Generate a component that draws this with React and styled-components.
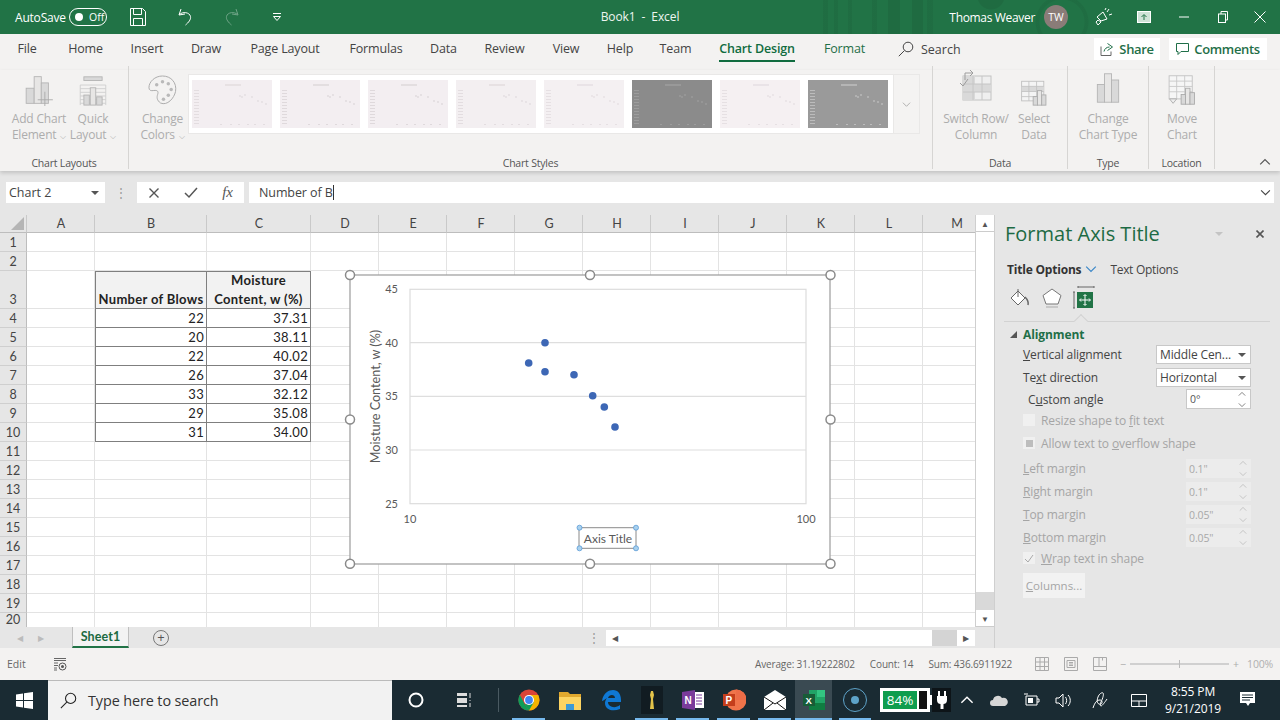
import React from 'react';
import styled, { createGlobalStyle } from 'styled-components';

const Global = createGlobalStyle`
  html, body { margin: 0; padding: 0; width: 1280px; height: 720px; overflow: hidden; background: #e6e6e6; }
  * { box-sizing: border-box; }
  #root { width: 1280px; height: 720px; }
`;
const UI = `"Open Sans", "Noto Sans", sans-serif`;
const CELL = `Lato, "Open Sans", sans-serif`;

const Page = styled.div`width:1280px;height:720px;display:flex;flex-direction:column;font-family:${UI};overflow:hidden;`;

/* ---------- title bar ---------- */
const TitleBar = styled.header`
  height:34px;flex:none;color:#fff;display:grid;grid-template-columns:1fr auto 1fr;align-items:center;font-size:12px;
  background-color:#217346;
  background-image:
    radial-gradient(circle at 991px -4px, rgba(0,0,0,.07) 0 13px, transparent 14px),
    radial-gradient(circle at 1062px 22px, transparent 0 22px, rgba(0,0,0,.05) 23px 26px, transparent 27px),
    linear-gradient(90deg,
      transparent 823px, rgba(0,0,0,.05) 823px 828px, transparent 828px 834px,
      rgba(0,0,0,.05) 834px 838px, transparent 838px 848px, rgba(0,0,0,.05) 848px 852px,
      transparent 852px 872px, rgba(0,0,0,.05) 872px 877px, transparent 877px 888px,
      rgba(0,0,0,.07) 888px 900px, transparent 900px 912px, rgba(0,0,0,.07) 912px 923px,
      transparent 923px 927px, rgba(0,0,0,.05) 927px 933px, transparent 933px);
`;
const QuickAccess = styled.div`display:flex;align-items:center;padding-left:15px;`;
const AutoLabel = styled.span`width:54px;letter-spacing:-.2px;`;
const Toggle = styled.div`width:38px;height:18px;border:1px solid #fff;border-radius:9px;display:flex;align-items:center;padding-left:5px;gap:6px;font-size:10.5px;`;
const Knob = styled.i`width:8px;height:8px;border-radius:50%;background:#fff;display:block;`;
const QuickBtn = styled.div`width:${p=>p.$w}px;display:flex;justify-content:center;opacity:${p=>p.$dim?0.35:1};`;
const DocTitle = styled.div`font-size:12px;letter-spacing:-.1px;color:#eef5f0;margin-top:-2px;`;
const UserArea = styled.div`display:flex;align-items:center;justify-content:flex-end;padding-right:8px;`;
const UserName = styled.span`font-size:12px;letter-spacing:-.33px;margin-right:9px;`;
const Avatar = styled.div`width:24px;height:24px;border-radius:50%;background:#8a7c78;display:flex;align-items:center;justify-content:center;font-size:10.5px;margin-right:20px;`;
const WinBtn = styled.div`width:${p=>p.$w}px;display:flex;justify-content:center;`;

/* ---------- tabs ---------- */
const TabRow = styled.nav`height:36px;flex:none;background:#f3f2f1;display:flex;align-items:flex-start;font-size:12.5px;color:#444;position:relative;`;
const Tab = styled.div`width:${p=>p.$w}px;display:flex;justify-content:center;white-space:nowrap;`;
const TabLabel = styled.span`
  height:25px;line-height:24px;letter-spacing:-.15px;margin-top:3px;
  color:${p=>p.$active?'#106c3f':p.$green?'#1f6f48':'#444'};
  font-weight:${p=>p.$active?600:400};
  border-bottom:${p=>p.$active?'2px solid #106c3f':'2px solid transparent'};
`;
const SearchTab = styled.div`display:flex;align-items:center;gap:7px;margin-left:19px;height:22px;margin-top:4px;`;
const Spacer = styled.div`flex:1;`;
const ActionBtn = styled.div`height:22px;margin-top:4px;background:#fff;display:flex;align-items:center;justify-content:center;gap:5px;color:#1f6f48;font-weight:600;font-size:13px;width:${p=>p.$w}px;margin-right:${p=>p.$mr}px;letter-spacing:-.35px;`;

/* ---------- ribbon ---------- */
const Ribbon = styled.section`height:101px;flex:none;background:#f3f2f1;display:flex;box-shadow:0 2px 4px rgba(0,0,0,.16);position:relative;z-index:2;`;
const Group = styled.div`width:${p=>p.$w}px;height:103px;flex:none;border-right:1px solid #d6d5d3;display:flex;flex-direction:column;margin-top:-4px;padding-top:4px;`;
const GroupBody = styled.div`flex:1;display:flex;padding-left:${p=>p.$pl||0}px;`;
const GroupLabel = styled.div`height:17px;font-size:10.5px;line-height:22px;text-align:center;color:#555;letter-spacing:-.2px;`;
const BigBtn = styled.div`width:${p=>p.$w}px;flex:none;display:flex;flex-direction:column;align-items:center;`;
const BigIcon = styled.div`height:36px;display:flex;align-items:flex-end;justify-content:center;`;
const BigText = styled.div`font-size:12px;line-height:16px;color:#adadad;text-align:center;white-space:nowrap;margin-top:5px;letter-spacing:-.2px;`;
const Caret = styled.span`font-size:8px;margin-left:1px;`;
const Gallery = styled.div`width:705px;height:60px;margin-top:4px;background:#fff;border:1px solid #e9e8e7;border-right:none;display:flex;align-items:center;gap:7.6px;padding-left:3px;flex:none;`;
const Thumb = styled.div`width:80.4px;height:48px;flex:none;background:${p=>p.$bg};`;
const Expander = styled.div`width:27px;height:60px;margin-top:4px;background:#f4f3f2;border:1px solid #e9e8e7;display:flex;align-items:center;justify-content:center;color:#aaa;flex:none;`;
const Collapse = styled.div`flex:1;display:flex;align-items:flex-end;justify-content:flex-end;padding:0 9px 3px 0;color:#555;`;

/* ---------- formula bar ---------- */
const FormulaBar = styled.section`height:44px;flex:none;background:#e6e6e6;display:flex;padding:11px 6px 0 6px;`;
const NameBox = styled.div`width:99px;height:21px;background:#fff;display:flex;align-items:center;justify-content:space-between;padding:0 5px 0 3px;font-size:12.5px;color:#444;`;
const Dots = styled.div`width:${p=>p.$w||32}px;height:21px;display:flex;align-items:center;justify-content:center;color:#9a9a9a;font-size:12px;`;
const FxBox = styled.div`width:107px;height:21px;background:#fff;display:flex;align-items:center;justify-content:space-between;padding:0 11px 0 12px;color:#555;`;
const FxText = styled.span`font-family:"Liberation Serif",serif;font-style:italic;font-size:15px;`;
const FormulaInput = styled.div`flex:1;margin-left:5px;height:21px;background:#fff;display:flex;align-items:center;justify-content:space-between;padding:0 3px 0 10px;font-size:12.5px;color:#444;`;
const Cursor = styled.span`border-right:1px solid #333;padding-right:0;line-height:15px;letter-spacing:-.1px;`;

/* ---------- main area ---------- */
const Main = styled.main`height:433px;flex:none;display:flex;`;
const Workspace = styled.div`width:995px;flex:none;display:flex;flex-direction:column;border-right:1px solid #cfcfcf;`;
const SheetRow = styled.div`height:412px;display:flex;background:#fff;`;
const Sheet = styled.div`
  width:975px;height:412px;overflow:hidden;position:relative;display:grid;
  grid-template-columns:27px 68px 112px 104px repeat(8,68px) 68px 68px;
  grid-template-rows:18px 19px 19px 38px repeat(16,19px) 15px;
  font-family:${CELL};font-size:13px;color:#222;
`;
const ColHead = styled.div`background:#e6e6e6;border-right:1px solid #c9c9c9;border-bottom:1px solid #bdbdbd;display:flex;align-items:center;justify-content:center;font-size:12.5px;color:#444;padding-left:1px;`;
const Corner = styled(ColHead)`align-items:flex-end;justify-content:flex-end;padding:0 2px 2px 0;`;
const RowHead = styled.div`background:#e6e6e6;border-right:1px solid #bdbdbd;border-bottom:1px solid #cfcfcf;display:flex;align-items:flex-end;justify-content:center;font-size:12.5px;line-height:${p=>p.$last?14:17}px;color:#444;`;
const Cell = styled.div`
  border-right:1px solid ${p=>p.$boxed?'#7f7f7f':'#e3e3e3'};
  border-bottom:1px solid ${p=>p.$boxed?'#7f7f7f':'#e3e3e3'};
  ${p=>p.$boxedLeft?'border-left:1px solid #7f7f7f;':''}
  ${p=>p.$boxedTop?'border-top:1px solid #7f7f7f;':''}
  background:${p=>p.$head?'#f2f2f2':'#fff'};
  font-weight:${p=>p.$head?700:400};
  display:flex;align-items:flex-end;justify-content:${p=>p.$head?'center':'flex-end'};
  text-align:center;line-height:19px;padding:0 ${p=>p.$head?0:2}px 0 0;white-space:pre-line;letter-spacing:${p=>p.$head?'.32px':'.3px'};
  & > span { position:relative; top:1px; }
`;
const ChartLayer = styled.svg`position:absolute;left:340px;top:50px;width:500px;height:320px;font-family:${CELL};`;
const VScroll = styled.div`width:19px;display:flex;flex-direction:column;background:#d9d9d9;border-left:1px solid #cfcfcf;`;
const ScrollBtn = styled.div`height:17px;background:#fff;display:flex;align-items:center;justify-content:center;border-bottom:1px solid #ccc;color:#555;font-size:8px;margin-top:${p=>p.$mt||0}px;`;
const VThumb = styled.div`height:360px;background:#fff;`;

const SheetBar = styled.div`height:21px;background:#e6e6e6;display:flex;align-items:center;position:relative;`;
const NavArrow = styled.div`width:21px;text-align:center;color:#bbb;font-size:8px;margin-left:${p=>p.$ml||0}px;`;
const SheetTab = styled.div`width:57px;height:21px;margin-left:21px;background:#f3f3f3;border:1px solid #bfbfbf;border-top:none;border-bottom:2px solid #217346;color:#1b6a41;font-weight:700;font-size:12.5px;display:flex;align-items:center;justify-content:center;font-family:${CELL};margin-top:-1px;letter-spacing:.1px;`;
const AddSheet = styled.div`width:16px;height:16px;border:1px solid #777;border-radius:50%;margin-left:24px;display:flex;align-items:center;justify-content:center;color:#555;font-size:13px;line-height:13px;`;
const HScrollZone = styled.div`margin-left:auto;margin-right:19px;display:flex;align-items:center;`;
const HBtn = styled.div`width:18px;height:16px;background:#fff;display:flex;align-items:center;justify-content:center;color:#555;font-size:8px;`;
const HThumb = styled.div`width:308px;height:16px;background:#fff;`;
const HTrack = styled.div`width:25px;height:16px;background:#d4d4d4;`;

/* ---------- task pane ---------- */
const Pane = styled.aside`flex:1;background:#e6e6e6;padding-left:9px;display:flex;flex-direction:column;color:#444;font-size:12px;`;
const PaneHead = styled.div`height:38px;display:flex;align-items:center;font-size:20px;color:#1d6b44;padding:0 8px 0 1px;flex:none;`;
const PaneTitle = styled.div`flex:1;margin-top:-1px;`;
const PaneCtl = styled.div`width:${p=>p.$w}px;margin-left:${p=>p.$ml||0}px;display:flex;justify-content:center;`;
const PaneTabs = styled.div`height:22px;margin-top:5px;display:flex;align-items:center;padding-left:3px;flex:none;font-size:12px;letter-spacing:-.3px;`;
const PaneTabOn = styled.span`font-weight:700;color:#333;letter-spacing:-.2px;margin-right:4px;`;
const PaneTabOff = styled.span`margin-left:13px;`;
const PaneIcons = styled.div`height:25px;margin-top:5px;display:flex;align-items:center;flex:none;padding-left:5px;gap:10px;`;
const PaneDivider = styled.div`height:1px;background:#d2d2d2;width:266px;margin-top:11px;flex:none;position:relative;`;
const Notch = styled.i`position:absolute;left:72px;top:-5px;width:10px;height:10px;transform:rotate(45deg);background:#e6e6e6;border-left:1px solid #d2d2d2;border-top:1px solid #d2d2d2;`;
const SectionHead = styled.div`height:18px;margin-top:3px;display:flex;align-items:center;flex:none;padding-left:6px;color:#1f6f48;font-weight:700;gap:6px;font-size:12px;letter-spacing:-.1px;`;
const Tri = styled.i`width:0;height:0;border-left:7px solid transparent;border-bottom:7px solid #555;display:block;`;
const Field = styled.div`height:${p=>p.$h||19}px;margin-top:${p=>p.$mt??3}px;display:flex;align-items:center;flex:none;padding-left:${p=>p.$pl||19}px;color:${p=>p.$off?'#a5a5a5':'#444'};letter-spacing:-.12px;`;
const FieldLabel = styled.span`flex:1;`;
const Select = styled.div`width:95px;height:19px;background:#fff;border:1px solid #c8c8c8;display:flex;align-items:center;justify-content:space-between;padding:0 3px;margin-right:29px;font-size:12px;color:#444;`;
const Arrow = styled.i`width:0;height:0;border-left:4px solid transparent;border-right:4px solid transparent;border-top:4px solid ${p=>p.$c||'#555'};display:block;margin-right:1px;`;
const Spin = styled.div`width:65px;height:${p=>p.$h||19}px;background:${p=>p.$off?'#ececec':'#fff'};border:${p=>p.$off?'none':'1px solid #c8c8c8'};display:flex;align-items:center;justify-content:space-between;padding:0 4px 0 3px;margin-right:29px;font-size:10.5px;color:${p=>p.$off?'#a8a8a8':'#555'};`;
const SpinArrows = styled.div`display:flex;flex-direction:column;align-items:center;line-height:0;color:${p=>p.$off?'#bbb':'#666'};gap:3px;`;
const CheckBox = styled.div`width:12px;height:12px;background:#f0f0f0;margin-right:6px;display:flex;align-items:center;justify-content:center;flex:none;`;
const Mixed = styled.i`width:7px;height:7px;background:#bdbdbd;display:block;`;
const ColumnsBtn = styled.div`width:62px;height:25px;background:#f2f2f2;margin:6px 0 0 19px;display:flex;align-items:center;justify-content:center;color:#a5a5a5;font-size:11.5px;flex:none;`;

/* ---------- status bar ---------- */
const StatusBar = styled.footer`height:32px;flex:none;background:#f3f2f1;display:flex;align-items:center;font-size:10.5px;color:#666;padding-left:7px;`;
const StatusEdit = styled.span`width:46px;`;
const StatusRight = styled.div`margin-left:auto;display:flex;align-items:center;`;
const StatItem = styled.span`margin-right:15px;font-size:10px;letter-spacing:-.14px;white-space:nowrap;`;
const ViewBtn = styled.div`width:29px;display:flex;justify-content:center;`;
const Zoom = styled.div`display:flex;align-items:center;color:#aaa;margin-left:6px;`;
const Track = styled.div`width:99px;height:2px;background:#d0d0d0;margin:0 4px;position:relative;`;
const TrackMark = styled.i`position:absolute;left:49px;top:-3px;width:1px;height:8px;background:#bbb;`;
const ZoomPct = styled.span`margin:0 7px 0 8px;color:#b0b0b0;letter-spacing:-.2px;`;

/* ---------- taskbar ---------- */
const Taskbar = styled.footer`height:40px;flex:none;background:#1a2b33;display:flex;align-items:stretch;color:#fff;`;
const Start = styled.div`width:48px;flex:none;display:flex;align-items:center;justify-content:center;`;
const SearchBox = styled.div`width:344px;flex:none;background:#f2f2f2;border-top:1px solid #bbb;display:flex;align-items:center;padding-left:12px;gap:11px;color:#333;font-size:14.4px;letter-spacing:-.1px;`;
const TaskItem = styled.div`
  width:${p=>p.$w||41}px;flex:none;display:flex;align-items:center;justify-content:center;position:relative;
  background:${p=>p.$active?'#3a4a52':'transparent'};
  margin-left:${p=>p.$ml||0}px;
  &::after{content:'';display:${p=>p.$open?'block':'none'};position:absolute;left:${p=>p.$active?0:4}px;right:${p=>p.$active?0:4}px;bottom:0;height:2px;background:#76b9ed;}
`;
const BatteryWrap = styled.div`display:flex;align-items:center;margin-left:5px;width:71px;flex:none;`;
const Battery = styled.div`width:50px;height:24px;background:#fff;border:3px solid #fff;display:flex;gap:2px;`;
const BatteryFill = styled.div`flex:1;background:#0f9d4e;color:#fff;font-size:13.5px;display:flex;align-items:center;justify-content:center;`;
const BatteryEmpty = styled.div`width:8px;background:#111;`;
const BatteryNub = styled.i`width:2px;height:10px;background:#fff;display:block;flex:none;`;
const Plug = styled.div`flex:1;height:24px;background:#0d1418;display:flex;align-items:center;justify-content:center;`;
const Clock = styled.div`width:72px;flex:none;text-align:center;font-size:12px;line-height:17px;letter-spacing:-.1px;display:flex;flex-direction:column;justify-content:center;`;

/* ---------- drawings ---------- */
const S = ({w=24,h=24,vb,children,...r}) => <svg width={w} height={h} viewBox={vb||`0 0 ${w} ${h}`} fill="none" {...r}>{children}</svg>;

const SaveIcon = () => <S w={18} h={20}><path d="M1.5 1.5h12l3 3v14h-15z" stroke="#fff"/><path d="M4.5 1.5v6h8v-6M4.5 18.5v-7h9v7" stroke="#fff"/></S>;
const UndoIcon = () => <S w={16} h={20}><path d="M4 2 2 8l6-1" stroke="#fff"/><path d="M2.5 7.5c3-3 10-2.5 11 2 .6 3-2 6-5 8.5" stroke="#fff"/></S>;
const RedoIcon = () => <S w={16} h={20} style={{transform:'scaleX(-1)'}}><path d="M4 2 2 8l6-1" stroke="#fff"/><path d="M2.5 7.5c3-3 10-2.5 11 2 .6 3-2 6-5 8.5" stroke="#fff"/></S>;
const MoreIcon = () => <S w={10} h={10}><path d="M1 1.5h8" stroke="#fff"/><path d="M1.5 4.5h7L5 8.5z" stroke="#fff"/></S>;
const FeedbackIcon = () => <S w={20} h={20}><path d="M4 10l6-5 4 7-6 2zM5 13l-2 2 2 3 3-3z" stroke="#fff"/><path d="M14 5l2-3M16 8l3-1M12 3l1-2" stroke="#fff"/></S>;
const DisplayIcon = () => <S w={14} h={14}><rect x=".5" y="1.5" width="13" height="11" fill="#cfe3d7" stroke="#fff"/><path d="M7 10V5M4.5 7 7 4.5 9.5 7" stroke="#217346"/></S>;
const MinIcon = () => <S w={10} h={10}><path d="M0 5h10" stroke="#fff"/></S>;
const RestoreIcon = () => <S w={10} h={12}><rect x=".5" y="3" width="7" height="8.5" stroke="#fff"/><path d="M3 3V.5h6.5V9H8" stroke="#fff"/></S>;
const CloseIcon = ({s=11,c='#fff',sw=1}) => <S w={s} h={s}><path d={`M.5.5l${s-1} ${s-1}M${s-.5} .5l-${s-1} ${s-1}`} stroke={c} strokeWidth={sw}/></S>;
const SearchIcon = ({c='#444',s=16}) => <S w={16} h={16} style={{width:s,height:s}}><circle cx="10" cy="6" r="4.8" stroke={c}/><path d="M6.4 9.6.8 15.2" stroke={c}/></S>;
const ShareIcon = () => <S w={14} h={14}><path d="M1 4.5v9h10v-4" stroke="#666"/><path d="M4 9.5c.5-3 3-4.5 5.5-4.5M7.5 1.5l5 3.5-5 3.5" stroke="#1f6f48"/></S>;
const CommentIcon = () => <S w={13} h={14}><path d="M.5 1.5h12v8H5l-3 3v-3H.5z" stroke="#1f6f48"/></S>;

const G = {line:'#b4b4b4', fill:'#d9d9d9', soft:'#e7e6e5'};
const AddChartIcon = () => <S w={29} h={32} vb="0 0 32 36"><rect x="1" y="16" width="9" height="17" fill={G.fill} stroke={G.line}/><rect x="10" y="3" width="8" height="30" fill={G.soft} stroke={G.line}/><rect x="18" y="10" width="8" height="23" fill={G.fill} stroke={G.line}/><path d="M22 20v16M14 29h17" stroke="#a8a8a8"/></S>;
const QuickIcon = () => <S w={28} h={31} vb="0 0 30 34"><rect x="5" y="2" width="20" height="4" fill={G.fill} stroke={G.line}/><path d="M1 11h28M1 15h28M1 19h28M1 23h28M1 27h28M1 31h28" stroke="#cfcfcf"/><path d="M1 11v22M29 11v22" stroke="#cfcfcf"/><rect x="5" y="22" width="6" height="11" fill={G.fill} stroke={G.line}/><rect x="12" y="14" width="6" height="19" fill={G.soft} stroke={G.line}/><rect x="19" y="24" width="6" height="9" fill={G.fill} stroke={G.line}/></S>;
const PaletteIcon = () => <S w={29} h={31} vb="0 0 30 32"><path d="M15 1C7 1 1 7 1 13c0 3 2 3.5 5 3 4-.5 5 1 4 4-1 3-1 6 3 9 7 3 14-5 15.500-12C30 8 24 1 15 1z" stroke="#aaa"/><g fill="#b9b9b9"><circle cx="9" cy="10" r="1.800"/><circle cx="15" cy="7" r="1.800"/><circle cx="21" cy="9" r="1.800"/><circle cx="24" cy="15" r="1.800"/><circle cx="21" cy="21" r="1.800"/><circle cx="16" cy="25" r="1.800"/></g></S>;
const SwitchIcon = () => <S w={32} h={34} style={{marginBottom:4}}><rect x="3" y="8" width="28" height="24" fill="#efefef" stroke="#c2c2c2"/><rect x="3" y="16" width="28" height="8" fill={G.fill}/><rect x="3" y="8" width="12" height="24" fill={G.fill}/><path d="M3 16h28M3 24h28M13 8v24M22 8v24" stroke="#c6c6c6"/><path d="M5 12V5h7M10 2l3 3-3 3M0 15l3 3 5-7" stroke="#9d9d9d" fill="none"/></S>;
const SelectDataIcon = () => <S w={30} h={29} vb="0 0 30 34"><rect x=".5" y="5" width="26" height="23" fill="#f4f4f4" stroke="#bdbdbd"/><rect x=".5" y="11" width="26" height="6" fill={G.fill}/><path d="M.5 11h26M.5 17h26M.5 23h26M9 5v23M18 5v23" stroke="#c2c2c2"/><rect x="14" y="23" width="5" height="10" fill={G.fill} stroke="#aaa"/><rect x="19" y="16" width="5" height="17" fill={G.soft} stroke="#aaa"/><rect x="24" y="21" width="5" height="12" fill={G.fill} stroke="#aaa"/></S>;
const ChangeTypeIcon = () => <S w={26} h={32} vb="0 0 26 36" style={{marginBottom:2}}><rect x="1" y="14" width="8" height="20" fill={G.fill} stroke={G.line}/><rect x="9" y="2" width="8" height="32" fill={G.soft} stroke={G.line}/><rect x="17" y="9" width="8" height="25" fill={G.fill} stroke={G.line}/></S>;
const MoveIcon = () => <S w={30} h={32} vb="0 0 30 36"><rect x=".5" y="2" width="26" height="26" fill="#f6f6f6" stroke="#c0c0c0"/><path d="M.5 8h26M.5 14h26M.5 20h26M9 2v26M18 2v26" stroke="#c8c8c8"/><path d="M1 28h8l-4 5z" fill="#eee" stroke="#aaa"/><rect x="14" y="23" width="5" height="11" fill={G.fill} stroke="#aaa"/><rect x="19" y="16" width="5" height="18" fill={G.soft} stroke="#aaa"/><rect x="24" y="21" width="5" height="13" fill={G.fill} stroke="#aaa"/></S>;

const MiniSvg = styled.svg`display:block;`;
const MiniChart = ({ink}) => (
  <MiniSvg width="80" height="48" viewBox="0 0 80 48">
    <rect x="33" y="4" width="16" height="2" fill={ink} opacity=".8"/>
    {[10,13,16,19,22,25,28,31,34,37,40,43].map(y=><rect key={y} x="2" y={y} width="5" height="1" fill={ink}/>)}
    {[28,38,46,55,62,71].map(x=><rect key={x} x={x} y="44" width="2" height="1" fill={ink}/>)}
    {[[48,16],[50,17],[53,15],[60,17],[66,21],[70,22],[74,24]].map(([x,y])=><circle key={x} cx={x} cy={y} r=".9" fill={ink}/>)}
  </MiniSvg>
);

const PaintIcon = () => <S w={22} h={22}><path d="M9 4 2 11l7 7 7-7z" stroke="#666" fill="#fff"/><path d="M9 2v8" stroke="#666"/><path d="M16 10c2 2 4 4 3 8" stroke="#666" strokeWidth="1.500"/></S>;
const PentIcon = () => <S w={22} h={22}><path d="M11 2 20 8.500 17 17H5L2 8.500z" fill="#fff" stroke="#777"/><path d="M5 20h12" stroke="#aaa"/></S>;
const LayoutIcon = () => <S w={24} h={24}><path d="M5 1h16M5 0v2M21 0v2M1 6v16M0 6h2M0 22h2" stroke="#666"/><rect x="4" y="6" width="16" height="16" fill="#217346"/><path d="M12 9v10M7 14h10" stroke="#fff"/><path d="M10.500 10 12 8.500l1.500 1.500M10.500 18 12 19.500l1.500-1.500M8 12.500 6.500 14 8 15.500M16 12.500l1.500 1.500-1.500 1.500" stroke="#fff" fill="none"/></S>;

const Chev = ({s=10,c='#666',d='M1 3l4 4 4-4'}) => <S w={10} h={10} style={{width:s,height:s}}><path d={d} stroke={c} fill="none"/></S>;
const SheetModeIcon = () => <S w={15} h={15}><path d="M1 1.500h12M1 3.500h12" stroke="#666"/><path d="M1 6h4M1 8.500h4M1 11h3M1 13h3" stroke="#666"/><circle cx="9.500" cy="9.500" r="3.500" stroke="#555"/><circle cx="9.500" cy="9.500" r="1.500" fill="#555"/></S>;
const NormalView = () => <S w={14} h={14}><path d="M.5.5h13v13H.5zM5 .5v13M9.500.5v13M.5 5h13M.5 9.500h13" stroke="#aaa"/></S>;
const PageView = () => <S w={14} h={14}><path d="M.5.5h13v13H.5z" stroke="#aaa"/><path d="M3 3.500h8v7H3zM5 5.500h4M5 7h4M5 8.500h4" stroke="#aaa"/></S>;
const BreakView = () => <S w={14} h={14}><path d="M.5.5h13v13H.5zM.5 9.500h13M6 .5v9M9.500 .5v3" stroke="#aaa"/></S>;

const WinLogo = () => <S w={17} h={17}><path d="M0 2.500 7 1.500v6.500H0zM8 1.300 17 0v8H8zM0 9h7v6.500l-7-1zM8 9h9v8l-9-1.300z" fill="#fff"/></S>;
const Chrome = () => <S w={22} h={22} vb="0 0 48 48"><circle cx="24" cy="24" r="23" fill="#db4437"/><path d="M24 47a23 23 0 0 0 20-34H24z" fill="#f4b400"/><path d="M4 12.500 15 34l9 13a23 23 0 0 1-20-34.500z" fill="#0f9d58"/><path d="M15 34 24 47 35 28z" fill="#0f9d58"/><circle cx="24" cy="24" r="11" fill="#fff"/><circle cx="24" cy="24" r="8.500" fill="#4285f4"/></S>;
const Folder = () => <S w={22} h={20}><path d="M0 2h9l2 2h11v6H0z" fill="#e0a82e"/><path d="M0 7h22v13H0z" fill="#fcd462"/><path d="M7 14h8v6H7z" fill="#3c9ad6"/></S>;
const Edge = () => <S w={20} h={22}><path d="M1 12C2 4 8 1 12 1c5 0 8 4 8 10v2H7c0 5 7 7 12 3v4c-7 3-15 1-15-6 0-2 1-4 2-5-2 1-4 3-5 3zm6-3h7c0-4-6-4-7 0z" fill="#0f78d4"/></S>;
const GoldTile = styled.div`width:22px;height:28px;background:#111c22;display:flex;align-items:center;justify-content:center;`;
const Gold = () => <GoldTile><S w={8} h={18}><path d="M3 0h2l1 4-1 4 1 10H2L3 8 2 4z" fill="#e3c34a"/></S></GoldTile>;
const OneNote = () => <S w={22} h={20}><path d="M12 2h10v16H12z" fill="#fff"/><path d="M14 5h6M14 8h6M14 11h6M14 14h6" stroke="#7a3b9b"/><path d="M0 2 13 0v20L0 18z" fill="#7a3b9b"/><text x="2.500" y="14" fill="#fff" fontSize="10" fontWeight="700" fontFamily="Liberation Sans">N</text></S>;
const Ppt = () => <S w={24} h={24}><circle cx="14" cy="12" r="10.500" fill="#f0744a"/><path d="M14 1.500V12h10.500A10.500 10.500 0 0 0 14 1.500z" fill="#ed6c47"/><rect x="1" y="6" width="12" height="12" fill="#c43e1c"/><text x="3.500" y="15.500" fill="#fff" fontSize="10" fontWeight="700" fontFamily="Liberation Sans">P</text></S>;
const Mail = () => <S w={24} h={24}><path d="M1 9 12 2l11 7v13H1z" fill="#fff"/><path d="M1 9l11 7 11-7M1 22l9-7M23 22l-9-7" stroke="#111"/></S>;
const XlIcon = () => <S w={24} h={24}><rect x="7" y="2" width="16" height="20" fill="#21a366"/><rect x="15" y="2" width="8" height="7" fill="#33c481"/><rect x="7" y="15" width="16" height="7" fill="#107c41"/><rect x="1" y="6" width="12" height="12" fill="#185c37"/><text x="3.500" y="15.500" fill="#fff" fontSize="9.500" fontWeight="700" fontFamily="Liberation Sans">X</text></S>;
const Record = () => <S w={26} h={28}><circle cx="13" cy="14" r="11.500" stroke="#5ea3c9"/><circle cx="13" cy="14" r="4" fill="#5ea3c9"/></S>;
const PlugIcon = () => <S w={10} h={18}><path d="M2 0v5M8 0v5" stroke="#fff" strokeWidth="2"/><path d="M0 5h10v4c0 3-2 4-3.500 4v5h-3v-5C2 13 0 12 0 9z" fill="#fff"/></S>;

const cols = ['A','B','C','D','E','F','G','H','I','J','K','L','M'];
const heading = {b:'Number of Blows', c:'Moisture\nContent, w (%)'};
const data = [[22,'37.31'],[20,'38.11'],[22,'40.02'],[26,'37.04'],[33,'32.12'],[29,'35.08'],[31,'34.00']];
const rowsCount = 20;

function Grid() {
  const out = [<Corner key="c"><S w={13} h={13}><path d="M13 0v13H0z" fill="#b5b5b5"/></S></Corner>];
  cols.forEach(c => out.push(<ColHead key={c}>{c}</ColHead>));
  for (let r = 1; r <= rowsCount; r++) {
    out.push(<RowHead key={'r'+r} $last={r===rowsCount}>{r}</RowHead>);
    cols.forEach(c => {
      const key = c + r;
      const isB = c === 'B', isC = c === 'C';
      if ((isB || isC) && r >= 3 && r <= 10) {
        const d = r >= 4 ? data[r-4] : null;
        out.push(
          <Cell key={key} $boxed $boxedLeft={isB} $boxedTop={r===3} $head={r===3}>
            <span>{r===3 ? (isB ? heading.b : heading.c) : d[isB?0:1]}</span>
          </Cell>
        );
      } else {
        out.push(<Cell key={key} />);
      }
    });
  }
  return out;
}

const pts = [[528.7,363],[545,342.7],[545,371.7],[574,374.7],[592.7,395.7],[604.3,407],[615,427]];
const Handle = ({x,y}) => <circle cx={x} cy={y} r="4.500" fill="#fff" stroke="#8a8a8a" strokeWidth="1.500"/>;
const Sel = ({x,y}) => <circle cx={x} cy={y} r="2.500" fill="#a9d1ee" stroke="#5b9bd5" strokeWidth=".8"/>;

function Chart() {
  const ticks = [[45,289.3],[40,342.7],[35,396.3],[30,450],[25,503.7]];
  return (
    <ChartLayer viewBox="340 265 500 320">
      <rect x="350" y="275" width="480" height="289" fill="#fff" stroke="#a3a3a3" strokeWidth="1.300"/>
      <rect x="410" y="289.300" width="396" height="214.400" fill="#fff" stroke="#dcdcdc" strokeWidth="1.200"/>
      {ticks.slice(1,4).map(([v,y])=><path key={v} d={`M410 ${y}h396`} stroke="#dedede" strokeWidth="1.200"/>)}
      {ticks.map(([v,y])=><text key={v} x="398" y={y+4} fontSize="11" fill="#595959" textAnchor="end">{v}</text>)}
      <text x="410" y="523" fontSize="11" fill="#595959" textAnchor="middle">10</text>
      <text x="806" y="523" fontSize="11" fill="#595959" textAnchor="middle">100</text>
      <text transform="translate(379.500 396.500) rotate(-90)" fontSize="12.600" fill="#595959" textAnchor="middle">Moisture Content, w (%)</text>
      {pts.map(([x,y],i)=><circle key={i} cx={x} cy={y} r="3.800" fill="#3d67b5"/>)}
      <rect x="579" y="527.700" width="57" height="20.600" fill="#fff" stroke="#8a8a8a"/>
      <text x="608" y="542.500" fontSize="12" fill="#595959" textAnchor="middle">Axis Title</text>
      {[[579.500,527.700],[636,527.700],[579.500,548.300],[636,548.300]].map(([x,y],i)=><Sel key={i} x={x} y={y}/>)}
      {[[350,275],[590,275],[830.500,275],[350,419.500],[830.500,419.500],[350,563.700],[590,563.700],[830.500,563.700]].map(([x,y],i)=><Handle key={i} x={x} y={y}/>)}
    </ChartLayer>
  );
}

const tabs = [['File',54],['Home',63],['Insert',60],['Draw',58],['Page Layout',100],['Formulas',82],['Data',53],['Review',69],['View',54],['Help',54],['Team',57]];
const thumbs = [
  ['#f3eef1','#e3dde0'],['#f3eef1','#dfd9dc'],['#f3eef1','#dfd9dc'],['#f3eff1','#e3dde0'],
  ['#f4f0f2','#e6e0e3'],['#8b8b8b','#9c9c9c'],['#f5f0f2','#e6e0e3'],['#9a9a9a','#bcbcbc']
];
const SpinCtl = ({off}) => (
  <SpinArrows $off={off}>
    <Chev s={8} c={off?'#bbb':'#666'} d="M1 7l4-4 4 4"/>
    <Chev s={8} c={off?'#bbb':'#666'}/>
  </SpinArrows>
);

export default function App() {
  return (
    <Page>
      <Global />
      <TitleBar>
        <QuickAccess>
          <AutoLabel>AutoSave</AutoLabel>
          <Toggle><Knob />Off</Toggle>
          <QuickBtn $w={62}><SaveIcon /></QuickBtn>
          <QuickBtn $w={32}><UndoIcon /></QuickBtn>
          <QuickBtn $w={62} $dim><RedoIcon /></QuickBtn>
          <QuickBtn $w={28}><MoreIcon /></QuickBtn>
        </QuickAccess>
        <DocTitle>Book1&nbsp; -&nbsp; Excel</DocTitle>
        <UserArea>
          <UserName>Thomas Weaver</UserName>
          <Avatar>TW</Avatar>
          <WinBtn $w={30}><FeedbackIcon /></WinBtn>
          <WinBtn $w={52}><DisplayIcon /></WinBtn>
          <WinBtn $w={27}><MinIcon /></WinBtn>
          <WinBtn $w={51}><RestoreIcon /></WinBtn>
          <WinBtn $w={24}><CloseIcon s={12}/></WinBtn>
        </UserArea>
      </TitleBar>

      <TabRow>
        {tabs.map(([t,w]) => <Tab key={t} $w={w}><TabLabel>{t}</TabLabel></Tab>)}
        <Tab $w={106}><TabLabel $active>Chart Design</TabLabel></Tab>
        <Tab $w={69}><TabLabel $green>Format</TabLabel></Tab>
        <SearchTab><SearchIcon /><span>Search</span></SearchTab>
        <Spacer />
        <ActionBtn $w={66} $mr={9}><ShareIcon />Share</ActionBtn>
        <ActionBtn $w={98} $mr={13}><CommentIcon />Comments</ActionBtn>
      </TabRow>

      <Ribbon>
        <Group $w={129}>
          <GroupBody $pl={12}>
            <BigBtn $w={54}><BigIcon><AddChartIcon /></BigIcon><BigText>Add Chart<br/>Element <Caret>⌵</Caret></BigText></BigBtn>
            <BigBtn $w={54}><BigIcon><QuickIcon /></BigIcon><BigText>Quick<br/>Layout <Caret>⌵</Caret></BigText></BigBtn>
          </GroupBody>
          <GroupLabel>Chart Layouts</GroupLabel>
        </Group>
        <Group $w={804}>
          <GroupBody $pl={8}>
            <BigBtn $w={51}><BigIcon><PaletteIcon /></BigIcon><BigText>Change<br/>Colors <Caret>⌵</Caret></BigText></BigBtn>
            <Gallery>
              {thumbs.map(([bg,ink],i)=><Thumb key={i} $bg={bg}><MiniChart ink={ink}/></Thumb>)}
            </Gallery>
            <Expander><Chev s={9} c="#aaa"/></Expander>
          </GroupBody>
          <GroupLabel>Chart Styles</GroupLabel>
        </Group>
        <Group $w={135}>
          <GroupBody $pl={7}>
            <BigBtn $w={72}><BigIcon><SwitchIcon /></BigIcon><BigText>Switch Row/<br/>Column</BigText></BigBtn>
            <BigBtn $w={44}><BigIcon><SelectDataIcon /></BigIcon><BigText>Select<br/>Data</BigText></BigBtn>
          </GroupBody>
          <GroupLabel>Data</GroupLabel>
        </Group>
        <Group $w={81}>
          <GroupBody><BigBtn $w={80}><BigIcon><ChangeTypeIcon /></BigIcon><BigText>Change<br/>Chart Type</BigText></BigBtn></GroupBody>
          <GroupLabel>Type</GroupLabel>
        </Group>
        <Group $w={66}>
          <GroupBody><BigBtn $w={66}><BigIcon><MoveIcon /></BigIcon><BigText>Move<br/>Chart</BigText></BigBtn></GroupBody>
          <GroupLabel>Location</GroupLabel>
        </Group>
        <Collapse><Chev s={12} c="#555" d="M1 7l4-4 4 4"/></Collapse>
      </Ribbon>

      <FormulaBar>
        <NameBox><span>Chart 2</span><Arrow /></NameBox>
        <Dots>⋮</Dots>
        <FxBox><CloseIcon s={10} c="#555" sw={1.4}/><S w={14} h={12}><path d="M1 6l4 4 8-9" stroke="#555" strokeWidth="1.500"/></S><FxText>fx</FxText></FxBox>
        <FormulaInput><Cursor>Number of B</Cursor><Chev s={11} c="#444"/></FormulaInput>
      </FormulaBar>

      <Main>
        <Workspace>
          <SheetRow>
            <Sheet><Grid /><Chart /></Sheet>
            <VScroll>
              <ScrollBtn>▲</ScrollBtn>
              <VThumb />
              <ScrollBtn $mt={18}>▼</ScrollBtn>
            </VScroll>
          </SheetRow>
          <SheetBar>
            <NavArrow $ml={9}>◀</NavArrow>
            <NavArrow>▶</NavArrow>
            <SheetTab>Sheet1</SheetTab>
            <AddSheet>+</AddSheet>
            <HScrollZone>
              <Dots $w={24}>⋮</Dots>
              <HBtn>◀</HBtn><HThumb /><HTrack /><HBtn>▶</HBtn>
            </HScrollZone>
          </SheetBar>
        </Workspace>
        <Pane>
          <PaneHead>
            <PaneTitle>Format Axis Title</PaneTitle>
            <PaneCtl $w={10}><Arrow $c="#c4c4c4"/></PaneCtl>
            <PaneCtl $w={24} $ml={24}><CloseIcon s={8} c="#555" sw={1.6}/></PaneCtl>
          </PaneHead>
          <PaneTabs>
            <PaneTabOn>Title Options</PaneTabOn>
            <Chev s={12} c="#3a87c8"/>
            <PaneTabOff>Text Options</PaneTabOff>
          </PaneTabs>
          <PaneIcons><PaintIcon /><PentIcon /><LayoutIcon /></PaneIcons>
          <PaneDivider><Notch /></PaneDivider>
          <SectionHead><Tri />Alignment</SectionHead>
          <Field $mt={2}><FieldLabel><u>V</u>ertical alignment</FieldLabel><Select>Middle Cen...<Arrow /></Select></Field>
          <Field $mt={4}><FieldLabel>Te<u>x</u>t direction</FieldLabel><Select>Horizontal<Arrow /></Select></Field>
          <Field $h={20} $mt={2} $pl={24}><FieldLabel>C<u>u</u>stom angle</FieldLabel><Spin $h={20}>0°<SpinCtl /></Spin></Field>
          <Field $off $mt={2} $h={18}><CheckBox /><FieldLabel>Resize shape to <u>f</u>it text</FieldLabel></Field>
          <Field $off $mt={5} $h={18}><CheckBox><Mixed /></CheckBox><FieldLabel>Allow text to <u>o</u>verflow shape</FieldLabel></Field>
          <Field $off $mt={7}><FieldLabel><u>L</u>eft margin</FieldLabel><Spin $off>0.1"<SpinCtl off /></Spin></Field>
          <Field $off $mt={4}><FieldLabel><u>R</u>ight margin</FieldLabel><Spin $off>0.1"<SpinCtl off /></Spin></Field>
          <Field $off $mt={4}><FieldLabel><u>T</u>op margin</FieldLabel><Spin $off>0.05"<SpinCtl off /></Spin></Field>
          <Field $off $mt={4}><FieldLabel><u>B</u>ottom margin</FieldLabel><Spin $off>0.05"<SpinCtl off /></Spin></Field>
          <Field $off $mt={2} $h={18}><CheckBox><S w={10} h={9}><path d="M1 5l3 3 5-7" stroke="#aaa"/></S></CheckBox><FieldLabel><u>W</u>rap text in shape</FieldLabel></Field>
          <ColumnsBtn><span><u>C</u>olumns...</span></ColumnsBtn>
        </Pane>
      </Main>

      <StatusBar>
        <StatusEdit>Edit</StatusEdit>
        <SheetModeIcon />
        <StatusRight>
          <StatItem>Average: 31.19222802</StatItem>
          <StatItem>Count: 14</StatItem>
          <StatItem>Sum: 436.6911922</StatItem>
          <ViewBtn><NormalView /></ViewBtn>
          <ViewBtn><PageView /></ViewBtn>
          <ViewBtn><BreakView /></ViewBtn>
          <Zoom>−<Track><TrackMark /></Track>+<ZoomPct>100%</ZoomPct></Zoom>
        </StatusRight>
      </StatusBar>

      <Taskbar>
        <Start><WinLogo /></Start>
        <SearchBox><SearchIcon c="#222" s={17}/><span>Type here to search</span></SearchBox>
        <TaskItem $w={48}><S w={16} h={16}><circle cx="8" cy="8" r="6.500" stroke="#fff" strokeWidth="2"/></S></TaskItem>
        <TaskItem $w={48}><S w={16} h={16}><path d="M1 1h10v3H1zM1 6h10v5H1zM1 13h10v2H1z" fill="#ddd"/><path d="M14 1v5M14 8v1M14 11v4" stroke="#ddd"/></S></TaskItem>
        <TaskItem $w={20}><S w={1} h={24}><path d="M.5 0v24" stroke="#4a5a62"/></S></TaskItem>
        <TaskItem $open><Chrome /></TaskItem>
        <TaskItem><Folder /></TaskItem>
        <TaskItem><Edge /></TaskItem>
        <TaskItem $open><Gold /></TaskItem>
        <TaskItem $open><OneNote /></TaskItem>
        <TaskItem $open><Ppt /></TaskItem>
        <TaskItem $open><Mail /></TaskItem>
        <TaskItem $open $active $w={37}><XlIcon /></TaskItem>
        <TaskItem $open $w={40} $ml={3}><Record /></TaskItem>
        <BatteryWrap>
          <Battery><BatteryFill>84%</BatteryFill><BatteryEmpty /></Battery>
          <BatteryNub />
          <Plug><PlugIcon /></Plug>
        </BatteryWrap>
        <TaskItem $w={32}><Chev s={14} c="#fff" d="M1 7l4-4 4 4"/></TaskItem>
        <TaskItem $w={32}><S w={18} h={11}><path d="M3 11a3 3 0 0 1 0-6 5 5 0 0 1 9-2 4 4 0 0 1 3 8z" fill="#d6d6d6"/></S></TaskItem>
        <TaskItem $w={32}><S w={17} h={14}><path d="M3 3h11v9H3z" stroke="#fff"/><path d="M5 5h5v5H5z" fill="#fff"/><path d="M14 6h2v3h-2M1 1h4" stroke="#fff"/></S></TaskItem>
        <TaskItem $w={32}><S w={17} h={15}><path d="M1 5h3l4-4v13l-4-4H1z" stroke="#fff"/><path d="M10.500 4c1.500 2 1.500 5 0 7M13 2c3 3 3 8 0 11" stroke="#fff"/></S></TaskItem>
        <TaskItem $w={42}><S w={18} h={20}><path d="M2 18c2-6 4-8 7-8 2 0 3 3 1 4-3 1-5-2-3-7 1-3 4-5 5-4s0 5-2 9c-1 2-1 4 0 4s4-4 6-7" stroke="#fff"/></S></TaskItem>
        <TaskItem $w={36}><S w={16} h={15}><path d="M.5 1.500h15v12H.5z" stroke="#fff"/><path d="M.5 8h15M8 8v5" stroke="#fff"/></S></TaskItem>
        <Clock>
          <span>8:55 PM</span>
          <span>9/21/2019</span>
        </Clock>
        <TaskItem $w={36}><S w={17} h={18}><path d="M1 1h15v11h-5l-2 3-2-3H1z" fill="#fff"/><path d="M3 4h11M3 6.500h11M3 9h8" stroke="#1a2b33"/></S></TaskItem>
      </Taskbar>
    </Page>
  );
}
